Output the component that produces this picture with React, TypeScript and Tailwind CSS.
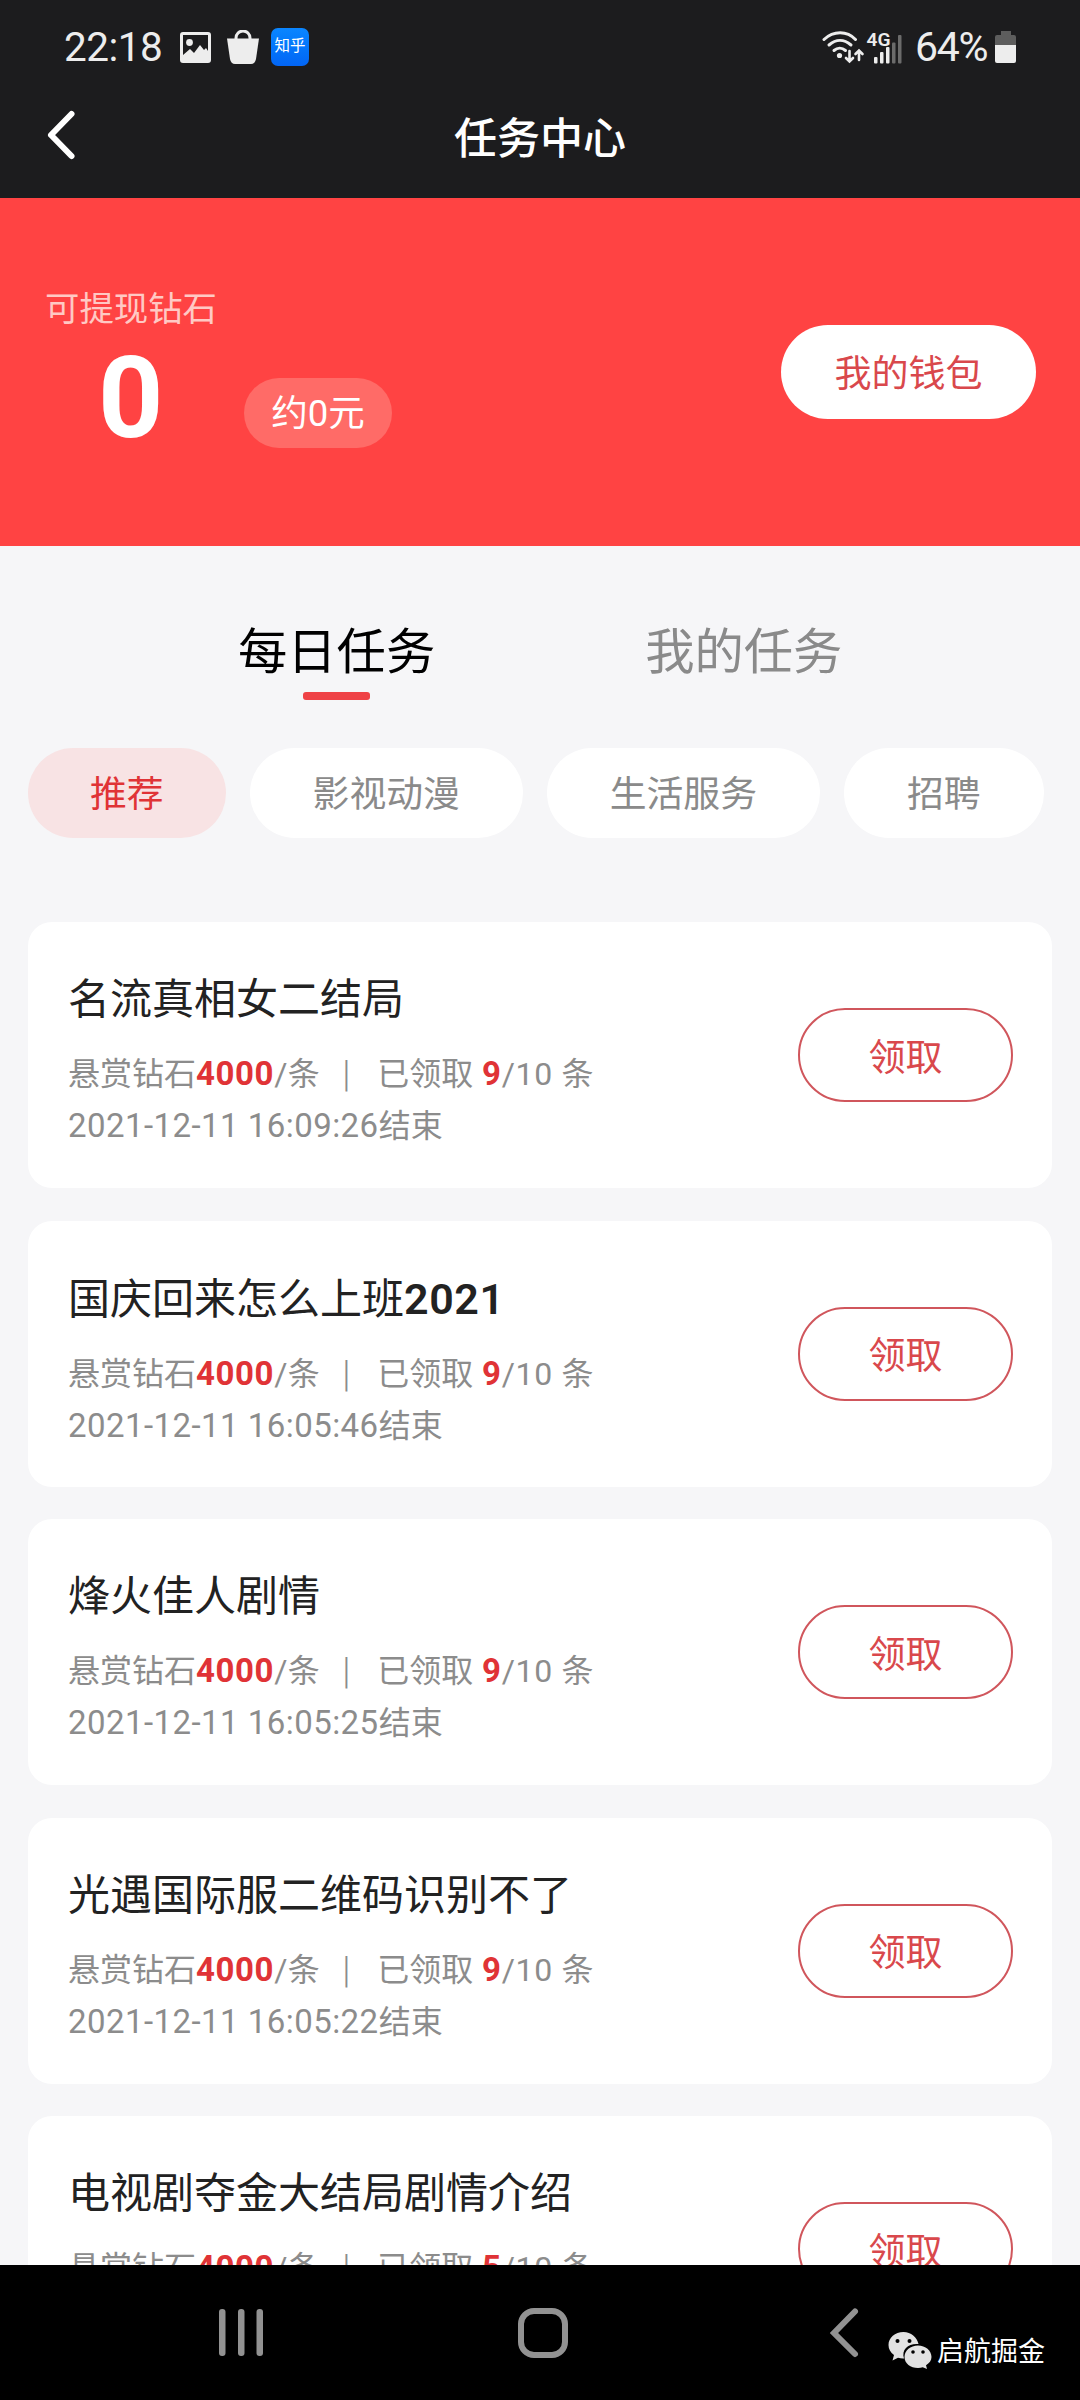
import React from "react";

type Task = { title: string; latin?: string; taken: string; end: string };

const tasks: Task[] = [
  { title: "名流真相女二结局", taken: "9", end: "2021-12-11 16:09:26" },
  { title: "国庆回来怎么上班", latin: "2021", taken: "9", end: "2021-12-11 16:05:46" },
  { title: "烽火佳人剧情", taken: "9", end: "2021-12-11 16:05:25" },
  { title: "光遇国际服二维码识别不了", taken: "9", end: "2021-12-11 16:05:22" },
  { title: "电视剧夺金大结局剧情介绍", taken: "5", end: "2021-12-11 16:05:20" },
];

function StatusBar() {
  return (
    <div className="flex h-[94px] items-center pl-[64px] pr-[64px] text-[#ededed]">
      <span className="w-[100px] text-[40.500px] leading-none tracking-[-0.500px]">22:18</span>
      <svg className="ml-[16px] h-[31px] w-[31px]" viewBox="0 0 31 31">
        <path fillRule="evenodd" fill="#ededed" d="M3 0H28Q31 0 31 3V28Q31 31 28 31H3Q0 31 0 28V3Q0 0 3 0ZM3 3V23L10 17L14 21L20 13L24 18L26 16L28 19V3Z" />
        <circle cx="9.5" cy="10.5" r="3.4" fill="#ededed" />
      </svg>
      <svg className="ml-[16px] h-[34px] w-[32px]" viewBox="0 0 32 34">
        <path d="M9 10V8a7 7 0 0 1 14 0v2" fill="none" stroke="#ededed" strokeWidth="3" />
        <path d="M0 8.5H32L29 29Q28 34 24 34H8Q4 34 3 29Z" fill="#ededed" />
      </svg>
      <div className="ml-[12px] flex h-[38px] w-[38px] items-center justify-center rounded-[7px] bg-linear-to-b from-[#0b86ff] to-[#0365f5] text-[15.500px] leading-none text-white">
        知乎
      </div>
      <svg className="ml-auto h-[36px] w-[84px]" viewBox="0 0 84 36">
        <g fill="none" stroke="#ededed" strokeWidth="3" strokeLinecap="round">
          <path d="M2 10.5C11.500 1.500 25 1.500 33.500 10.500" />
          <path d="M7 16C14 10 22 10 29 16" />
          <path d="M12 21.500C15.500 18.500 20 18.500 23.500 21.500" />
          <path d="M27.500 22V32M24 29L27.500 32.500L31 29" strokeWidth="2.600" />
          <path d="M37 31V21.500M33.500 25L37 21.500L40.500 25" strokeWidth="2.600" />
        </g>
        <circle cx="17.500" cy="26.500" r="2.600" fill="#ededed" />
        <text x="44.500" y="16.500" fontSize="18.500" fontWeight="600" fill="#ededed" textLength="24" lengthAdjust="spacingAndGlyphs">4G</text>
        <g fill="#ededed">
          <rect x="52" y="28" width="3.500" height="6.500" rx="1" />
          <rect x="58" y="23" width="3.500" height="11.500" rx="1" />
          <rect x="64" y="18" width="3.500" height="16.500" rx="1" />
        </g>
        <g fill="#6b6b6b">
          <rect x="70" y="13.500" width="3.500" height="21" rx="1" />
          <rect x="76" y="6" width="3.500" height="28.500" rx="1" />
        </g>
      </svg>
      <span className="ml-[9px] w-[75px] text-[41px] leading-none tracking-[-1.300px]">64%</span>
      <svg className="ml-[5px] h-[32px] w-[21px]" viewBox="0 0 21 32">
        <path d="M6 0H16V4H19Q21 4 21 6V14H0V6Q0 4 2 4H6Z" fill="#5d5d5d" />
        <path d="M0 14H21V30Q21 32 19 32H2Q0 32 0 30Z" fill="#ededed" />
      </svg>
    </div>
  );
}

function Header() {
  return (
    <header className="h-[198px] shrink-0 bg-[#1c1c1e]">
      <StatusBar />
      <div className="relative flex h-[90px] items-center justify-center">
        <svg className="absolute left-[46px] top-[15px] h-[52px] w-[32px]" viewBox="0 0 32 52">
          <path d="M25.500 5L5 26L25.500 47" fill="none" stroke="#fff" strokeWidth="6" strokeLinecap="round" strokeLinejoin="round" />
        </svg>
        <h1 className="text-[43px] leading-none font-medium text-white">任务中心</h1>
      </div>
    </header>
  );
}

function Balance() {
  return (
    <section className="flex h-[348px] shrink-0 justify-between bg-[#ff4343] pl-[45px] pr-[44px] text-white">
      <div className="pt-[90px]">
        <div className="text-[34.400px] leading-[42px] text-[#ffc9c4]">可提现钻石</div>
        <div className="flex">
          <div className="w-[199px] pl-[53px] text-[114px] leading-[136px] font-bold">0</div>
          <div className="mt-[48px] flex h-[70px] w-[148px] items-center justify-center rounded-full bg-[#ff6b67] pt-[2px] text-[36.500px] leading-none">
            约0元
          </div>
        </div>
      </div>
      <button className="mt-[127px] flex h-[94px] w-[255px] items-center justify-center rounded-full bg-white pt-[5px] text-[37px] leading-none text-[#d9484c]">
        我的钱包
      </button>
    </section>
  );
}

function Chip({ label, active }: { label: string; active?: boolean }) {
  return (
    <div
      className={
        active
          ? "flex h-[90px] items-center rounded-full bg-[#f8e3e4] px-[62px] pt-[4px] text-[#e03336]"
          : "flex h-[90px] items-center rounded-full bg-white px-[63px] pt-[4px] text-[#8a8a8a]"
      }
    >
      {label}
    </div>
  );
}

function TaskCard({ task }: { task: Task }) {
  return (
    <article className="flex h-[266px] shrink-0 items-start justify-between rounded-[24px] bg-white pl-[40px] pr-[39px]">
      <div className="pt-[50px] text-[32px] leading-[52px] text-[#8c8c8c]">
        <h2 className="text-[42px] leading-[56px] text-[#222]">
          {task.title}
          {task.latin && <span className="text-[43px] font-semibold tracking-[0.600px]">{task.latin}</span>}
        </h2>
        <p className="mt-[20px] flex whitespace-pre">
          <span>悬赏钻石</span>
          <b className="text-[33px] font-bold tracking-[0.600px] text-[#e03336]">4000</b>
          <span className="w-[68px] tracking-[0.400px]">/条</span>
          <span className="w-[35px] text-[37px] font-light">|</span>
          <span>已领取 </span>
          <b className="ml-[1px] text-[33px] font-bold tracking-[0.600px] text-[#e03336]">{task.taken}</b>
          <span className="tracking-[0.700px]">/10 条</span>
        </p>
        <p>
          <span className="text-[33px] tracking-[0.450px]">{task.end}</span>结束
        </p>
      </div>
      <button className="mt-[86px] flex h-[94px] w-[215px] items-center justify-center rounded-full border-[2.500px] border-[#d0565c] pt-[6px] text-[37px] leading-none text-[#d9484c]">
        领取
      </button>
    </article>
  );
}

function NavBar() {
  return (
    <nav className="relative flex h-[135px] shrink-0 bg-black">
      <svg className="ml-[218px] mt-[43px] h-[50px] w-[46px]" viewBox="0 0 46 50">
        <g fill="#929292">
          <rect x="1" y="1" width="6.500" height="47" rx="3" />
          <rect x="20" y="1" width="6.500" height="47" rx="3" />
          <rect x="38.500" y="1" width="6.500" height="47" rx="3" />
        </g>
      </svg>
      <div className="ml-[254px] mt-[43px] h-[50px] w-[50px] rounded-[16px] border-[6px] border-[#929292]" />
      <svg className="ml-[261px] mt-[42px] h-[52px] w-[32px]" viewBox="0 0 32 52">
        <path d="M26 4.500L5 26L26 47" fill="none" stroke="#929292" strokeWidth="6" strokeLinecap="round" />
      </svg>
      <div className="ml-[27px] mt-[63px] flex h-[44px] items-center">
        <svg className="h-[38px] w-[44px]" viewBox="0 0 44 38">
          <path d="M15.500 1C7 1 .5 6.800 .5 14c0 4 2 7.600 5.500 10L4.500 29.500L10 26.700c2 .6 4 .8 6 .7C13 18 21 12 30.500 13C29 6 23 1 15.500 1Z" fill="#e2e2e2" />
          <path d="M30 14.500c-7.500 0-13.500 5-13.500 11.500S22.500 37 30 37c1.700 0 3.300-.2 4.800-.7L39 38l-1-3.700c3.300-2 5.500-5 5.500-8.300C43.500 19.500 37.500 14.500 30 14.500Z" fill="#e2e2e2" />
          <g fill="#000">
            <circle cx="9.500" cy="10" r="2" />
            <circle cx="21.500" cy="10" r="2" />
            <circle cx="25" cy="21" r="1.800" />
            <circle cx="35" cy="21" r="1.800" />
          </g>
        </svg>
        <span className="ml-[5px] pt-[4px] text-[27px] leading-none text-white">启航掘金</span>
      </div>
    </nav>
  );
}

export default function App() {
  return (
    <div className="flex h-[2400px] w-[1080px] flex-col overflow-hidden bg-[#f6f6f8] font-[Roboto,'Noto_Sans_CJK_SC',sans-serif]">
      <Header />
      <Balance />
      <main className="flex min-h-0 flex-1 flex-col overflow-hidden">
        <div className="flex shrink-0 gap-[210px] pl-[238px] pt-[76px] text-[49.300px] leading-[60px]">
          <div className="flex flex-col items-center text-black">
            每日任务
            <span className="mt-[10px] h-[8px] w-[67px] rounded-[3px] bg-[#ef4246]" />
          </div>
          <div className="text-[#8a8a8a]">我的任务</div>
        </div>
        <div className="mt-[48px] flex shrink-0 gap-[24px] pl-[28px] text-[36.800px] leading-none">
          <Chip label="推荐" active />
          <Chip label="影视动漫" />
          <Chip label="生活服务" />
          <Chip label="招聘" />
        </div>
        <div className="mt-[84px] flex flex-col gap-[32.500px] px-[28px]">
          {tasks.map((t) => (
            <TaskCard key={t.end} task={t} />
          ))}
        </div>
      </main>
      <NavBar />
    </div>
  );
}
